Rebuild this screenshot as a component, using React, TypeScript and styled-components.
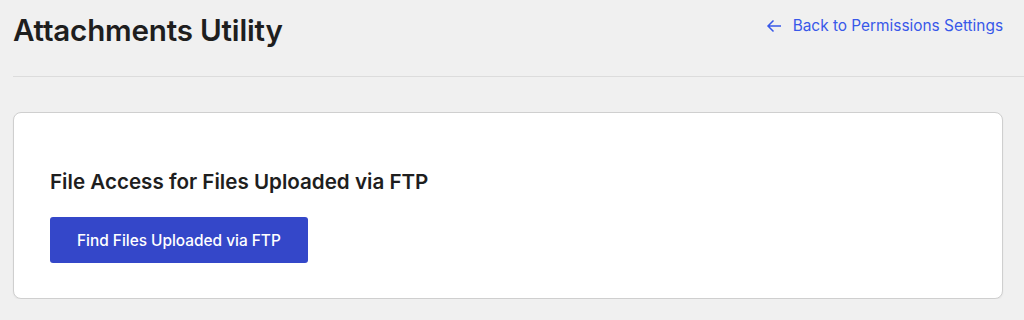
import styled, { createGlobalStyle } from "styled-components";

const GlobalStyle = createGlobalStyle`
  body {
    margin: 0;
    background: #f0f0f0;
    font-family: Inter, "Noto Sans", sans-serif;
    color: #1e1e1e;
  }
`;

const Page = styled.div`
  padding: 0 21px 0 13px;
`;

const Header = styled.header`
  display: flex;
  justify-content: space-between;
  align-items: flex-start;
  padding-top: 10px;
  padding-bottom: 26px;
  border-bottom: 1px solid #dcdcdc;
  margin-right: -21px;
  padding-right: 21px;
`;

const Title = styled.h1`
  margin: 0;
  font-size: 29.6px;
  line-height: 40px;
  font-weight: 600;
  letter-spacing: -0.2px;
`;

const BackLink = styled.a`
  display: flex;
  align-items: center;
  gap: 11px;
  margin-top: 6px;
  font-size: 15.4px;
  line-height: 20px;
  color: #3858e9;
  text-decoration: none;
`;

const Card = styled.section`
  margin-top: 35px;
  background: #fff;
  border: 1px solid #cfcfcf;
  border-radius: 8px;
  box-shadow: 0 1px 2px rgba(0, 0, 0, 0.05);
  padding: 57px 36px 35px;
`;

const CardTitle = styled.h2`
  margin: 0 0 23px;
  font-size: 20.6px;
  line-height: 24px;
  font-weight: 600;
`;

const Button = styled.button`
  height: 46px;
  padding: 0 27px;
  border: none;
  border-radius: 3px;
  background: #3447c9;
  color: #fff;
  font-family: inherit;
  font-size: 15.4px;
  font-weight: 500;
  cursor: pointer;
`;

function ArrowLeft() {
  return (
    <svg width="16" height="16" viewBox="0 0 16 16" fill="none">
      <path d="M15 8H2M7.5 2.5L2 8l5.5 5.5" stroke="currentColor" strokeWidth="1.5" />
    </svg>
  );
}

export default function App() {
  return (
    <Page>
      <GlobalStyle />
      <Header>
        <Title>Attachments Utility</Title>
        <BackLink href="#">
          <ArrowLeft />
          Back to Permissions Settings
        </BackLink>
      </Header>
      <Card>
        <CardTitle>File Access for Files Uploaded via FTP</CardTitle>
        <Button>Find Files Uploaded via FTP</Button>
      </Card>
    </Page>
  );
}
